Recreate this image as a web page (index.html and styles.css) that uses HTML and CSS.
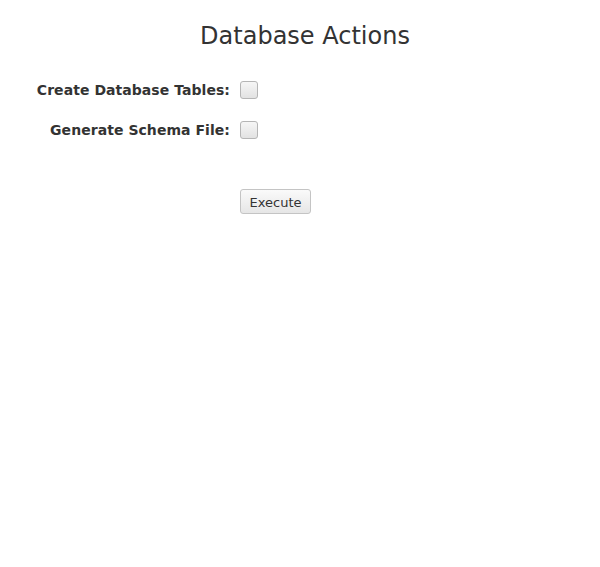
FILE: index.html
```html
<!DOCTYPE html>
<html>
<head>
<meta charset="utf-8">
<link rel="stylesheet" href="styles.css">
</head>
<body>
<div class="page">
  <h1 class="title">Database Actions</h1>
  <form class="form">
    <div class="row">
      <label class="label" for="c1">Create Database Tables:</label>
      <span class="box"></span>
    </div>
    <div class="row">
      <label class="label" for="c2">Generate Schema File:</label>
      <span class="box"></span>
    </div>
    <div class="actions">
      <button type="button" class="btn">Execute</button>
    </div>
  </form>
</div>
</body>
</html>
```
FILE: styles.css
```css
html, body {
  margin: 0;
  padding: 0;
  background: #fff;
}
body {
  font-family: "DejaVu Sans", sans-serif;
  color: #333;
}
.page {
  width: 610px;
  padding-top: 21px;
}
.title {
  margin: 0;
  text-align: center;
  font-size: 24px;
  font-weight: normal;
  line-height: 30px;
  color: #333;
}
.form {
  margin-top: 30px;
}
.row {
  display: grid;
  grid-template-columns: 230px 18px;
  column-gap: 10px;
  align-items: center;
  height: 18px;
  margin-bottom: 22px;
}
.label {
  text-align: right;
  font-weight: bold;
  font-size: 14px;
  letter-spacing: 0.05px;
}
.box {
  width: 16px;
  height: 16px;
  border: 1px solid #b5b5b5;
  border-radius: 3px;
  background: linear-gradient(#f6f6f6, #e2e2e2);
}
.actions {
  padding-left: 240px;
  padding-top: 28px;
}
.btn {
  display: block;
  width: 71px;
  height: 25px;
  padding: 2px 0 0;
  border: 1px solid #c4c4c4;
  border-radius: 3px;
  background: linear-gradient(#fafafa, #e6e6e6);
  font-family: "DejaVu Sans", sans-serif;
  font-size: 13px;
  line-height: 18px;
  color: #333;
}
```
